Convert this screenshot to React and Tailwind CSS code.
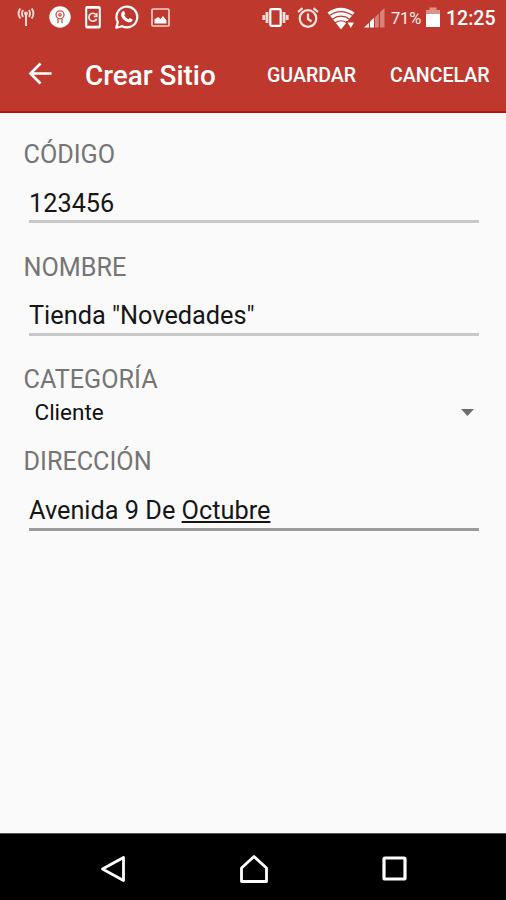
import clsx from 'clsx'

const fields = [
  { label: 'CÓDIGO', value: '123456' },
  { label: 'NOMBRE', value: 'Tienda "Novedades"' },
]

function NotificationIcons() {
  return (
    <div className="flex items-center pb-[2px]">
      <svg className="ml-[17px] h-5 w-[18px]" viewBox="0 0 18 20" fill="none" stroke="#fbd9d4" strokeWidth="1.9">
        <path d="M9 7.500V19" strokeWidth="2" />
        <circle cx="9" cy="6.500" r="2" fill="#fbd9d4" stroke="none" />
        <path d="M6 3Q4 6.500 6 10M12 3Q14 6.500 12 10M3.300 1.500Q-.2 6.500 3.300 11.500M14.700 1.500Q18.200 6.500 14.700 11.500" />
      </svg>
      <svg className="ml-[14px] h-[22px] w-[22px]" viewBox="0 0 22 22">
        <circle cx="11" cy="11" r="10.700" fill="#fff" />
        <g fill="none" stroke="#c4564c" strokeWidth="1.300">
          <circle cx="11" cy="8.800" r="4" />
          <circle cx="11" cy="8.800" r="1.200" />
          <path d="M9 12.500v4.700M13 12.500v4.700" />
        </g>
      </svg>
      <svg className="ml-[14px] h-6 w-[16px]" viewBox="0 0 16 24" fill="none" stroke="#fff">
        <rect x="1.200" y="2" width="13.600" height="20.500" rx="1" strokeWidth="2" />
        <path d="M1 3h14M1 21.500h14" strokeWidth="1.500" />
        <path d="M11 9.700A4 4 0 1 0 11.600 13.800M11.800 8.300v3H8.700" stroke="#fbe3e0" strokeWidth="1.700" />
      </svg>
      <svg className="ml-[14px] h-6 w-6" viewBox="0 0 24 24">
        <path d="M1.300 22.700l1.500-5.600A10.400 10.400 0 1 1 7 21.200Z" fill="none" stroke="#fff" strokeWidth="2.200" strokeLinejoin="round" />
        <path d="M8 6.200c.6-.3 1.100-.1 1.300.4l.8 2c.1.400 0 .7-.8 1.600.9 1.900 2.300 3.200 4.300 4.100.9-1.100 1.100-1.300 1.500-1.100l2.100 1c.5.300.5.700.3 1.300-.6 1.500-2.400 2.200-4.200 1.700-3.500-1-6.100-3.600-7.100-6.300-.6-1.800.2-3.800 1.800-4.700z" fill="#fff" />
      </svg>
      <svg className="ml-[12px] h-[19px] w-[19px]" viewBox="0 0 19 19">
        <rect x="1" y="1" width="17" height="17" rx="1" fill="none" stroke="#f7cdc7" strokeWidth="1.700" />
        <path d="M3.500 15.500v-4l3.500-2.500 2.500 2 2.500-3 3.500 4.500v3z" fill="#fff" />
      </svg>
    </div>
  )
}

function SystemIcons() {
  return (
    <div className="flex items-center text-white">
      <svg className="h-5 w-[27px]" viewBox="0 0 27 20">
        <rect x="8.300" y="1.200" width="10.400" height="16.600" rx="1" fill="none" stroke="#fff" strokeWidth="2.200" />
        <path d="M5 4v11M22 4v11" stroke="#fbdcd8" strokeWidth="2.800" />
        <path d="M1.800 7v5M25.200 7v5" stroke="#fbdcd8" strokeWidth="2.800" />
      </svg>
      <svg className="ml-[8px] h-[22px] w-[22px]" viewBox="0 0 22 22" fill="none" stroke="#fde3df" strokeWidth="2.200">
        <circle cx="11" cy="11.500" r="8.300" />
        <path d="M11 6.500v5.500l3.500 2.500M1 5l4.500-3.800M21 5l-4.500-3.800" />
      </svg>
      <svg className="ml-[8px] h-[23px] w-[28px]" viewBox="0 0 28 23">
        <path d="M.5 5.500Q13.500-4 27.500 5.500L14 22.500Z" fill="#fff" />
        <path d="M2 8.800Q14 .5 26 8.800M5 12.400Q14 6 23 12.400M8 16Q14 11.500 20 16" fill="none" stroke="#bf382e" strokeWidth="1.200" />
        <path d="M19 14h9v9h-9z" fill="#bf382e" />
        <path d="M20.500 15.500h6.500l-3.200 5.500z" fill="#fff" />
      </svg>
      <svg className="ml-[9px] h-[20px] w-[21px]" viewBox="0 0 21 20">
        <path d="M11 19.500V9.200l3.800-3.700v14zM16 19.500V4.300L20.500 0v19.500z" fill="#d88279" />
        <path d="M0 19.500L5 15v4.500zM6 19.500v-5.700l4-4v9.700z" fill="#fff" />
      </svg>
      <span className="ml-[6px] w-[31px] pt-px text-[16.500px] leading-9 tracking-[-0.200px] whitespace-nowrap text-[#fdeeec]">71%</span>
      <svg className="ml-[4px] h-5 w-[14px] -translate-y-px" viewBox="0 0 14 20">
        <path d="M0 3h3.500V.5h7V3H14v5H0z" fill="#df9189" />
        <path d="M0 7h14v13H0z" fill="#fff" />
      </svg>
      <span className="ml-[6px] w-[60px] pt-px text-[19.500px] leading-9 font-medium whitespace-nowrap">12:25</span>
    </div>
  )
}

function Label({ children }) {
  return <div className="h-[30px] text-[25.200px] leading-[30px] text-[#757575]">{children}</div>
}

function Input({ focused, children }) {
  return (
    <div
      className={clsx(
        'ml-[5px] w-[450px] border-b-[3px] pt-[0.500px] pl-[0.500px] text-[25.300px] leading-[30px] text-[#161616]',
        focused ? 'h-[36px] border-[#9b9b9b]' : 'h-[35px] border-[#c8c8c8]',
      )}
    >
      {children}
    </div>
  )
}

export default function App() {
  return (
    <div className="flex h-[900px] w-[506px] flex-col overflow-hidden bg-[#fafafa] font-['Roboto','Noto_Sans',sans-serif]">
      <header className="h-[113px] border-b-2 border-[#b3150f] bg-[#bf382e] text-white">
        <div className="flex h-9 items-center justify-between">
          <NotificationIcons />
          <SystemIcons />
        </div>
        <div className="flex h-[76px] items-center">
          <svg className="ml-[28px] h-6 w-6" viewBox="0 0 24 24" fill="none" stroke="#fff" strokeWidth="2.700">
            <path d="M12.500 1.500L2.500 11.500l10 10M2.500 11.500h21" />
          </svg>
          <h1 className="ml-[33px] w-[150px] pt-[3px] text-[27.900px] leading-9 font-medium whitespace-nowrap">Crear Sitio</h1>
          <button className="ml-[32px] w-[90px] pt-[3px] text-left text-[19.600px] font-medium whitespace-nowrap">GUARDAR</button>
          <button className="ml-[33px] w-[101px] pt-[3px] text-left text-[19.600px] font-medium whitespace-nowrap">CANCELAR</button>
        </div>
      </header>

      <main className="flex-1 px-[23.500px] pt-[27px]">
        {fields.map(({ label, value }) => (
          <section key={label} className="h-[112.500px]">
            <Label>{label}</Label>
            <div className="mt-[18px]">
              <Input>{value}</Input>
            </div>
          </section>
        ))}
        <section className="h-[82.400px]">
          <Label>CATEGORÍA</Label>
          <div className="mt-[2px] ml-[11px] flex h-[30px] items-center justify-between pr-[9px]">
            <span className="text-[22.500px] leading-[30px] text-[#111]">Cliente</span>
            <svg className="h-[7px] w-[13px]" viewBox="0 0 13 7">
              <path d="M0 0h13L6.500 7z" fill="#6d6d6d" />
            </svg>
          </div>
        </section>
        <section>
          <Label>DIRECCIÓN</Label>
          <div className="mt-[18.100px]">
            <Input focused>
              Avenida 9 De <span className="underline decoration-[1.500px] underline-offset-[2px]">Octubre</span>
            </Input>
          </div>
        </section>
      </main>

      <nav className="flex h-[67px] items-center border-t border-[#555] bg-black pt-[3px]">
        <svg className="ml-[100px] h-7 w-[26px]" viewBox="0 0 26 28" fill="none" stroke="#fff" strokeWidth="2.800">
          <path d="M23.500 2.500v23L2.500 14z" strokeLinejoin="round" />
        </svg>
        <svg className="ml-[113px] h-7 w-[30px]" viewBox="0 0 30 28" fill="none" stroke="#fff" strokeWidth="2.800">
          <path d="M2.500 26.500V13L15 1.500 27.500 13v13.500z" strokeLinejoin="round" />
        </svg>
        <svg className="ml-[113px] h-[25px] w-[25px]" viewBox="0 0 25 25" fill="none" stroke="#fff" strokeWidth="3.200">
          <rect x="2" y="2" width="21" height="21" rx="1" />
        </svg>
      </nav>
    </div>
  )
}
